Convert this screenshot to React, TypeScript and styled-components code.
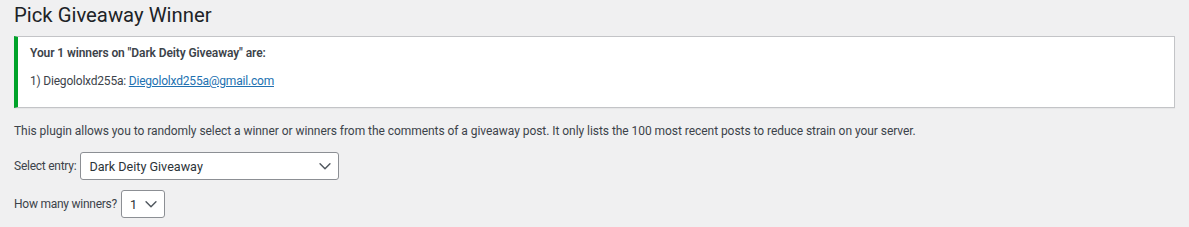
import React from "react";
import styled, { createGlobalStyle } from "styled-components";

const GlobalStyle = createGlobalStyle`
  html, body {
    margin: 0;
    padding: 0;
    background: #f0f0f1;
  }
  body {
    font-family: Roboto, "Liberation Sans", sans-serif;
    font-size: 12px;
    color: #3c434a;
  }
`;

const Wrap = styled.div`
  padding: 0 14px;
`;

const Title = styled.h1`
  margin: 0;
  padding: 0;
  font-size: 20.3px;
  font-weight: 400;
  line-height: 30px;
  color: #1d2327;
`;

const Notice = styled.div`
  margin: 6px 0 0;
  background: #fff;
  border: 1px solid #c3c4c7;
  border-left: 4px solid #00a32a;
  padding: 7px 12px 17px;
  box-shadow: 0 1px 1px rgba(0, 0, 0, 0.04);
`;

const NoticeLine = styled.p<{ $bold?: boolean }>`
  margin: 0;
  line-height: 18px;
  font-weight: ${(p) => (p.$bold ? 600 : 400)};
  letter-spacing: ${(p) => (p.$bold ? "-0.1px" : "-0.2px")};
  color: #3c434a;

  & + & {
    margin-top: 10px;
  }
`;

const Link = styled.a`
  color: #2271b1;
  text-decoration: underline;
`;

const Intro = styled.p`
  margin: 13px 0 0;
  line-height: 20px;
  letter-spacing: -0.05px;
`;

const Field = styled.div<{ $top: number }>`
  display: flex;
  align-items: center;
  gap: 4px;
  margin-top: ${(p) => p.$top}px;
`;

const Label = styled.label`
  line-height: 20px;
  letter-spacing: -0.25px;
`;

const SelectBox = styled.div<{ $width: number }>`
  position: relative;
  box-sizing: border-box;
  width: ${(p) => p.$width}px;
  height: 28px;
  background: #fff;
  border: 1px solid #8c8f94;
  border-radius: 3px;
  display: flex;
  align-items: center;
  padding: 0 24px 0 8px;
  font-size: 12.6px;
  color: #2c3338;
`;

const Chevron = styled.svg`
  position: absolute;
  right: 4px;
  top: 50%;
  transform: translateY(-50%);
  width: 18px;
  height: 18px;
`;

function Select({ value, width }: { value: string; width: number }) {
  return (
    <SelectBox $width={width}>
      {value}
      <Chevron viewBox="0 0 20 20">
        <path
          d="M4.5 7.5l5.5 5.5 5.5-5.5"
          fill="none"
          stroke="#50575e"
          strokeWidth="1.6"
          strokeLinecap="round"
          strokeLinejoin="round"
        />
      </Chevron>
    </SelectBox>
  );
}

export default function App() {
  return (
    <Wrap>
      <GlobalStyle />
      <Title>Pick Giveaway Winner</Title>
      <Notice>
        <NoticeLine $bold>Your 1 winners on "Dark Deity Giveaway" are:</NoticeLine>
        <NoticeLine>
          1) Diegololxd255a: <Link href="#">Diegololxd255a@gmail.com</Link>
        </NoticeLine>
      </Notice>
      <Intro>
        This plugin allows you to randomly select a winner or winners from the
        comments of a giveaway post. It only lists the 100 most recent posts to
        reduce strain on your server.
      </Intro>
      <Field $top={11}>
        <Label>Select entry:</Label>
        <Select value="Dark Deity Giveaway" width={259} />
      </Field>
      <Field $top={10}>
        <Label>How many winners?</Label>
        <Select value="1" width={44} />
      </Field>
    </Wrap>
  );
}
